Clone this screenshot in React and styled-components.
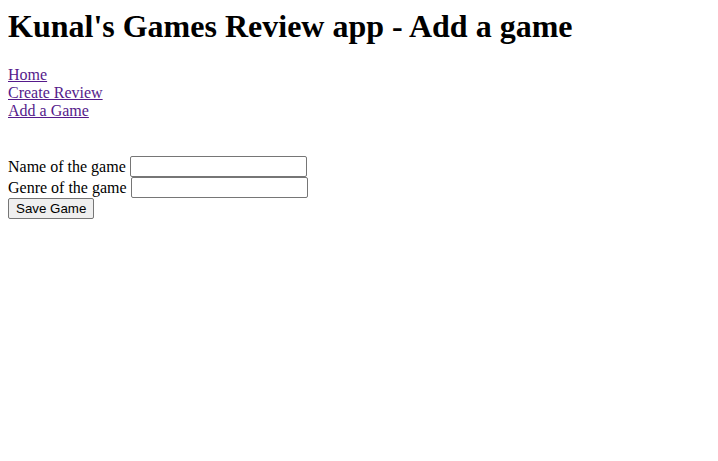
import React from 'react';
import styled, { createGlobalStyle } from 'styled-components';

const GlobalStyle = createGlobalStyle`
    body {
        margin: 8px;
        background: #ffffff;
        color: #000000;
        font-family: "Liberation Serif", "Times New Roman", serif;
        font-size: 16px;
    }
`;

const Title = styled.h1`
    font-size: 32px;
    font-weight: bold;
    margin: 0 0 21px 0;
    line-height: 37px;
`;

const Nav = styled.nav`
    display: flex;
    flex-direction: column;
    align-items: flex-start;
    line-height: 18px;
`;

const NavLink = styled.a`
    color: #551a8b;
    text-decoration: underline;
`;

const Form = styled.form`
    margin-top: 36px;
    line-height: 18px;
`;

const Row = styled.div`
    display: flex;
    align-items: center;
    gap: 4px;
`;

const TextInput = styled.input`
    width: 177px;
    height: 21px;
    box-sizing: border-box;
    border: 1px solid #767676;
    border-radius: 2px;
    padding: 1px 2px;
    font-family: "Liberation Sans", Arial, sans-serif;
    font-size: 13.33px;
`;

const SaveButton = styled.button`
    height: 21px;
    padding: 1px 7px;
    font-family: "Liberation Sans", Arial, sans-serif;
    font-size: 13.33px;
    background: #efefef;
    border: 1px solid #767676;
    border-radius: 2px;
    color: #000000;
`;

const App = () => {
    return (
        <>
            <GlobalStyle />
            <Title>Kunal's Games Review app - Add a game</Title>
            <Nav>
                <NavLink href="#">Home</NavLink>
                <NavLink href="#">Create Review</NavLink>
                <NavLink href="#">Add a Game</NavLink>
            </Nav>
            <Form onSubmit={e => e.preventDefault()}>
                <Row>
                    <span>Name of the game</span>
                    <TextInput type="text" />
                </Row>
                <Row>
                    <span>Genre of the game</span>
                    <TextInput type="text" />
                </Row>
                <SaveButton type="submit">Save Game</SaveButton>
            </Form>
        </>
    );
};

export default App;
